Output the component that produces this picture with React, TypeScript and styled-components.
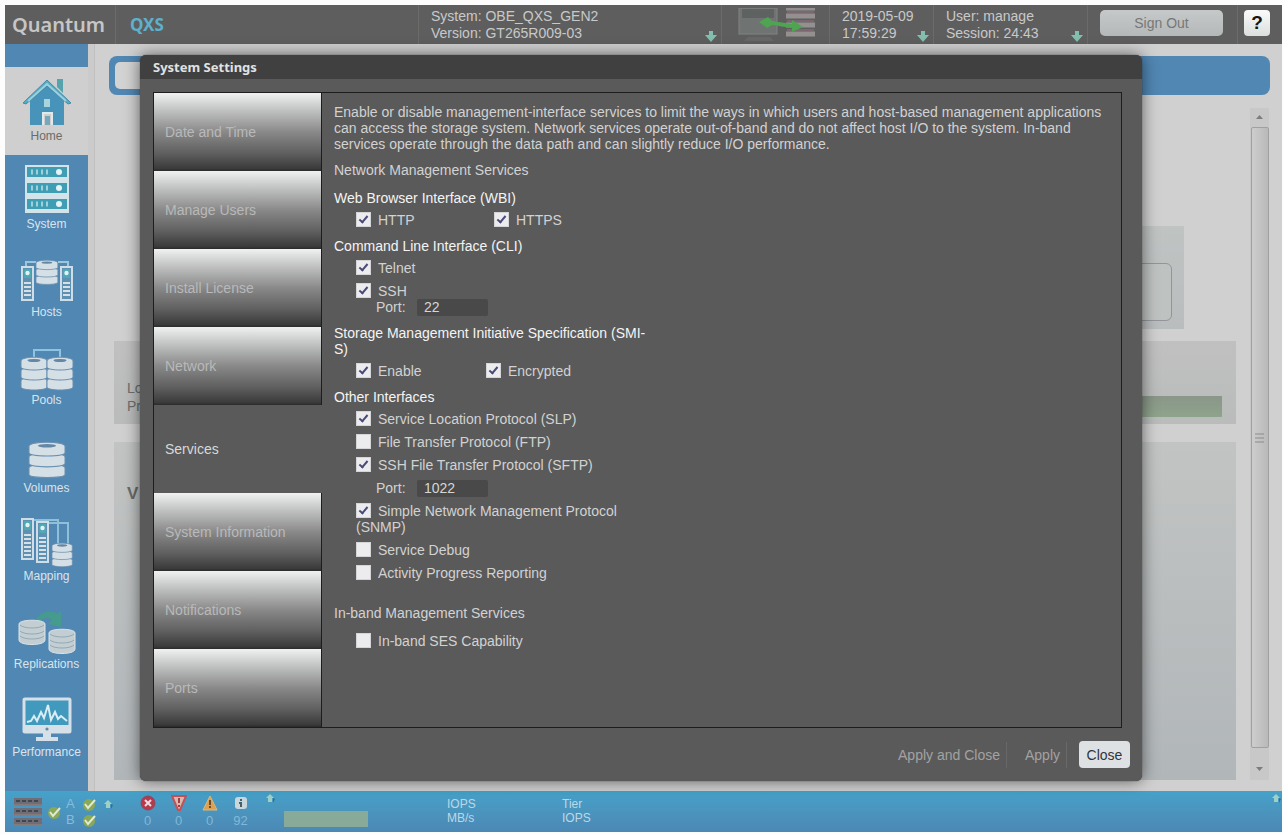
import React from "react";
import styled, { createGlobalStyle } from "styled-components";

const GlobalStyle = createGlobalStyle`
  *, *::before, *::after { box-sizing: border-box; }
  body {
    margin: 0;
    background: #fdfdfd;
    font-family: "Liberation Sans", Arial, sans-serif;
    font-size: 14px;
  }
  button, input { font-family: inherit; }
`;

const Page = styled.div`
  position: relative;
  display: flex;
  flex-direction: column;
  min-height: 100vh;
  padding: 5px 2px 2px 5px;
`;

/* ---------- header ---------- */

const Header = styled.header`
  display: flex;
  height: 39px;
  background: #5e5e5e;
  color: #c9c9c9;
`;

const HeaderCell = styled.div<{ $width?: number }>`
  position: relative;
  flex: ${(p) => (p.$width ? `0 0 ${p.$width}px` : "1 1 0")};
  display: flex;
  flex-direction: column;
  justify-content: center;
  padding-left: 12px;
  font-size: 14px;
  line-height: 17px;
  white-space: nowrap;
  border-left: 1px solid #6b6b6b;
  &:first-child {
    border-left: 0;
    padding-left: 7px;
  }
`;

const Brand = styled.span`
  font: 600 20px/24px "Noto Sans", sans-serif;
  color: #c6c6c6;
`;

const Product = styled.span`
  font: 700 17px/24px "Noto Sans", sans-serif;
  color: #5fb0cc;
  padding-left: 2px;
`;

const HeaderArrow = styled.svg`
  position: absolute;
  right: 3px;
  bottom: 1px;
`;

const ControlCell = styled(HeaderCell)`
  flex-direction: row;
  align-items: center;
  justify-content: flex-start;
  padding-bottom: 4px;
`;

const SignOut = styled.button`
  width: 123px;
  height: 26px;
  border: 0;
  border-radius: 5px;
  background: linear-gradient(#c6c9c9, #b5b8b8);
  color: #777;
  font-size: 14px;
`;

const Help = styled.button`
  width: 26px;
  height: 26px;
  margin-left: -6px;
  padding: 0;
  border: 0;
  border-radius: 4px;
  background: linear-gradient(#fafafa, #dcdfdf);
  color: #151515;
  font: 700 19px/26px "Liberation Sans", sans-serif;
`;

/* ---------- body ---------- */

const Body = styled.div`
  flex: 1;
  display: flex;
`;

const Sidebar = styled.nav`
  flex: 0 0 83px;
  padding-top: 23px;
  background: #5187b3;
`;

const NavItem = styled.a<{ $active?: boolean }>`
  display: flex;
  flex-direction: column;
  align-items: center;
  justify-content: flex-end;
  height: 88px;
  padding-bottom: 11px;
  font-size: 12px;
  line-height: 16px;
  text-decoration: none;
  color: ${(p) => (p.$active ? "#6b6b6b" : "#d9e4ec")};
  background: ${(p) => (p.$active ? "#cfcfcf" : "transparent")};
  svg { display: block; margin-bottom: 1px; }
`;

const Main = styled.main`
  flex: 1;
  display: flex;
  flex-direction: column;
  padding: 12px 12px 11px 21px;
  background: linear-gradient(90deg, #cbcbcb 0 6px, #c0c0c0 6px 7px, #d0d0d0 7px);
`;

const BlueBar = styled.div`
  height: 39px;
  padding: 6px;
  border-radius: 8px;
  background: #5187b3;
`;

const BarField = styled.div`
  width: 120px;
  height: 27px;
  border-radius: 5px;
  background: #d2d3d2;
`;

const Scroller = styled.div`
  flex: 1;
  display: flex;
  gap: 14px;
  padding: 0 1px 0 5px;
`;

const Panels = styled.div`
  flex: 1;
  display: flex;
  flex-direction: column;
`;

const SmallPanel = styled.div`
  height: 103px;
  margin: 131px 52px 0 100px;
  padding: 37px 12px 8px;
  background: linear-gradient(#bfc3c2, #b9bdbe);
`;

const SmallCard = styled.div`
  height: 58px;
  border: 1px solid #92969a;
  border-radius: 6px;
  background: #bec2c1;
`;

const CapacityPanel = styled.div`
  height: 83px;
  margin-top: 12px;
  padding: 38px 14px 0 13px;
  display: flex;
  background: linear-gradient(#c0c0c0, #b9bcbb);
  color: #6e6e6e;
  font-size: 14px;
  line-height: 18px;
`;

const CapacityBar = styled.div`
  flex: 1;
  height: 21px;
  margin-top: 17px;
  background: linear-gradient(#8a9689, #8ea48c);
`;

const VolumePanel = styled.div`
  flex: 1;
  margin-top: 18px;
  padding: 42px 13px 0;
  background: linear-gradient(#c2c4c3, #b1b6b9);
  color: #6a6a6a;
  font-size: 17px;
  font-weight: 700;
  line-height: 20px;
`;

const ScrollTrack = styled.div`
  flex: 0 0 19px;
  display: flex;
  flex-direction: column;
  align-items: center;
  justify-content: space-between;
  margin-top: 13px;
  padding: 6px 0 8px;
  background: #c8c8c8;
`;

const ScrollThumb = styled.div`
  flex: 1;
  width: 18px;
  margin: 8px 0 19px;
  display: flex;
  align-items: center;
  justify-content: center;
  border: 1px solid #a0a0a0;
  border-radius: 2px;
  background: linear-gradient(90deg, #cdcdcd, #b9b9b9);
`;

/* ---------- status bar ---------- */

const StatusBar = styled.footer`
  display: flex;
  align-items: center;
  height: 41px;
  padding-left: 8px;
  background: linear-gradient(#45a2c9, #4b93bd 55%, #4b88b5);
  color: #bcd8e6;
  font-size: 13px;
  line-height: 14px;
`;

const HealthGroup = styled.div`
  display: flex;
  align-items: center;
  width: 119px;
  gap: 4px;
  color: #86bddb;
`;

const Controllers = styled.div`
  display: grid;
  grid-template-columns: 12px 16px;
  gap: 2px 4px;
  align-items: center;
`;

const Corner = styled.svg`
  align-self: flex-start;
  margin-top: 2px;
`;

const Events = styled.div`
  display: flex;
  margin-right: 8px;
`;

const EventCount = styled.div`
  display: flex;
  flex-direction: column;
  align-items: center;
  gap: 3px;
  width: 31px;
  color: #82b8d6;
`;

const StatusMeter = styled.div`
  width: 84px;
  height: 16px;
  margin: 14px 0 0 8px;
  background: #87ab98;
`;

const Rate = styled.div`
  width: 115px;
  padding-bottom: 1px;
  font-size: 12px;
  line-height: 14px;
`;

const Rates = styled.div`
  flex: 1;
  display: flex;
  padding-left: 79px;
`;

/* ---------- dialog ---------- */

const Overlay = styled.div`
  position: absolute;
  inset: 0;
  padding: 55px 142px 0 140px;
`;

const Dialog = styled.section`
  border-radius: 6px;
  background: #5a5a5a;
  box-shadow: 0 0 16px rgba(0, 0, 0, 0.55), 0 0 1px #222;
`;

const DialogTitle = styled.h1`
  margin: 0;
  height: 24px;
  padding-left: 13px;
  border-radius: 6px 6px 0 0;
  background: #404040;
  color: #e2e2e2;
  font: 700 13px/24px "Noto Sans", sans-serif;
`;

const Frame = styled.div`
  display: flex;
  margin: 13px 20px 0 13px;
  border: 1px solid #1d1d1d;
`;

const Tabs = styled.div`
  flex: 0 0 168px;
  display: flex;
  flex-direction: column;
`;

const Tab = styled.button<{ $active?: boolean }>`
  height: ${(p) => (p.$active ? 88 : 78)}px;
  padding: 0 0 0 11px;
  border: 0;
  border-right: 1px solid ${(p) => (p.$active ? "transparent" : "#1d1d1d")};
  text-align: left;
  font-size: 14px;
  color: ${(p) => (p.$active ? "#d8d8d8" : "#b9b9b9")};
  background: ${(p) =>
    p.$active
      ? "transparent"
      : "linear-gradient(#f0f1f1 0, #c5c6c6 20%, #898989 50%, #5e5e5e 78%, #3a3a3a 97%, #2a2a2a)"};
`;

const Content = styled.div`
  flex: 1;
  padding: 11px 6px 9px 12px;
  color: #d2d2d2;
  font-size: 14px;
  line-height: 16px;
`;

const Intro = styled.p`
  margin: 0;
  max-width: 780px;
`;

const Section = styled.h2<{ $gap: number }>`
  margin: ${(p) => p.$gap}px 0 12px;
  font-size: 14px;
  font-weight: 400;
`;

const Group = styled.fieldset`
  width: 318px;
  margin: 0 0 10px;
  padding: 0;
  border: 0;
`;

const Legend = styled.legend`
  padding: 0;
  margin-bottom: 6px;
  color: #f4f4f4;
`;

const Options = styled.div`
  display: flex;
  flex-direction: column;
  gap: 7px;
  padding-left: 22px;
`;

const Pair = styled.div<{ $first: number }>`
  display: grid;
  grid-template-columns: ${(p) => p.$first}px 1fr;
`;

const Tick = styled.input.attrs({ type: "checkbox" })`
  appearance: none;
  display: inline-grid;
  place-content: center;
  width: 15px;
  height: 15px;
  margin: 0 7px 0 0;
  vertical-align: top;
  border: 1px solid #d5d5d8;
  background: #ececee;
  &:checked::after {
    content: "";
    width: 5px;
    height: 9px;
    margin-bottom: 2px;
    border: solid #4a4a78;
    border-width: 0 2px 2px 0;
    transform: rotate(40deg);
  }
`;

const PortRow = styled.label`
  display: flex;
  align-items: center;
  height: 16px;
  padding-left: 20px;
`;

const PortLabel = styled.span`
  width: 41px;
`;

const PortInput = styled.input`
  width: 71px;
  height: 17px;
  padding: 0 7px;
  border: 0;
  border-radius: 2px;
  background: #494949;
  color: #d6d6d6;
  font-size: 14px;
`;

const DialogFooter = styled.div`
  display: flex;
  justify-content: flex-end;
  align-items: center;
  height: 53px;
  padding-right: 12px;
`;

const FlatButton = styled.button`
  height: 26px;
  padding: 0 6px;
  margin-right: 12px;
  border: 0;
  border-right: 1px solid #686868;
  background: transparent;
  color: #a2a2a2;
  font-size: 14px;
`;

const CloseButton = styled.button`
  width: 51px;
  height: 27px;
  padding: 0;
  border: 0;
  border-radius: 4px;
  background: #dde1e3;
  color: #30343c;
  font-size: 14px;
`;

/* ---------- drawings ---------- */

const DownArrow = () => (
  <HeaderArrow width="14" height="13" viewBox="0 0 14 13" aria-hidden="true">
    <path d="M5 1h4v4h4L7 12 1 5h4z" fill="#83bfae" />
  </HeaderArrow>
);

const CornerArrow = () => (
  <Corner width="12" height="12" viewBox="0 0 12 12" aria-hidden="true">
    <path d="M2 5 6 1l4 4H8v4H4V5z" fill="#9fd0c4" />
    <path d="M9 5l2 1-2 4z" fill="#3d6f6a" />
  </Corner>
);

const Disk = ({ x, y, w = 26, rows = 3 }: { x: number; y: number; w?: number; rows?: number }) => {
  const band = 10;
  return (
    <g>
      {Array.from({ length: rows }, (_, i) => rows - 1 - i).map((i) => (
        <path
          key={i}
          transform={`translate(${x} ${y + i * band})`}
          d={`M0 4C0 -1 ${w} -1 ${w} 4V10C${w} 14 0 14 0 10Z`}
          fill="#d5dfe6"
          stroke="#6b8fae"
          strokeWidth="1"
        />
      ))}
      <ellipse cx={x + w / 2} cy={y + 3.5} rx={w / 4} ry="1.6" fill="#6587a6" />
    </g>
  );
};

const HomeIcon = () => (
  <svg width="52" height="50" viewBox="0 0 52 50" aria-hidden="true">
    <path d="M36 2h6v14l-6-6z" fill="#55a3ac" />
    <path d="M9 23 26 7l17 16v25H31V37h-9v11H9z" fill="#4793ba" />
    <path d="M2 26 26 3l24 23-3 1L26 9 5 27z" fill="#54adc6" stroke="#4a89a8" strokeWidth="1" />
    <path d="M7 24 26 7l19 17" fill="none" stroke="#9bd0de" strokeWidth="2" />
    <path d="M22 48V36h9v12" fill="#cfcfcf" stroke="#dfeaed" strokeWidth="2" />
    <path d="M24 39h5v9h-5z" fill="#79a6b8" />
    <path d="M23 22h6v8h-6z" fill="#a9d4de" />
  </svg>
);

const SystemIcon = () => (
  <svg width="46" height="50" viewBox="0 0 46 50" aria-hidden="true">
    {[1, 17, 33].map((y) => (
      <g key={y}>
        <rect x="2" y={y} width="42" height="12" fill="#3f9db4" stroke="#d3e3ea" strokeWidth="2" />
        <path d={`M7 ${y + 6}h17`} stroke="#9bd2dd" strokeWidth="5" strokeDasharray="2 3" />
        <circle cx="35" cy={y + 6} r="3" fill="#e6f4f6" />
        <path d={`M1 ${y + 14}h44`} stroke="#d3e3ea" strokeWidth="2" />
      </g>
    ))}
  </svg>
);

const Tower = ({ x, y, h }: { x: number; y: number; h: number }) => (
  <g>
    <rect x={x} y={y} width="11" height={h} fill="#5e90b1" stroke="#cfdde6" strokeWidth="2" />
    <rect x={x + 2} y={y + 2} width="7" height="9" fill="#4fa9b4" />
    <circle cx={x + 5.5} cy={y + 6} r="2.2" fill="#e2f2f4" />
    <path d={`M${x + 5.5} ${y + 15}V${y + h - 3}`} stroke="#d5e0e7" strokeWidth="7" strokeDasharray="2 2" />
  </g>
);

const HostsIcon = () => (
  <svg width="54" height="44" viewBox="0 0 54 44" aria-hidden="true">
    <path d="M6 8V3h10M48 8V3H38" fill="none" stroke="#9cc6da" strokeWidth="2" />
    <Tower x={2} y={8} h={33} />
    <Tower x={41} y={8} h={33} />
    <g transform="translate(16 1) scale(.84 .74)"><Disk x={0} y={0} /></g>
  </svg>
);

const PoolsIcon = () => (
  <svg width="54" height="43" viewBox="0 0 54 43" aria-hidden="true">
    <path d="M14 10V2h26v8" fill="none" stroke="#8fc4e0" strokeWidth="2" />
    <Disk x={1} y={9} />
    <Disk x={27} y={9} />
  </svg>
);

const VolumesIcon = () => (
  <svg width="38" height="38" viewBox="0 0 38 38" aria-hidden="true">
    <g transform="translate(1 1) scale(1 1.08)"><Disk x={0} y={0} w={36} /></g>
  </svg>
);

const MappingIcon = () => (
  <svg width="54" height="50" viewBox="0 0 54 50" aria-hidden="true">
    <path d="M12 3h26v24M28 6h20v21" fill="none" stroke="#8fc0da" strokeWidth="2" />
    <Tower x={2} y={2} h={40} />
    <Tower x={17} y={5} h={40} />
    <g transform="translate(32 26) scale(.78 .72)"><Disk x={0} y={0} /></g>
  </svg>
);

const ReplicationsIcon = () => (
  <svg width="58" height="46" viewBox="0 0 58 46" aria-hidden="true">
    <path d="M17 13C20 3 33 0 39 5l4-3v16l-13-3 4-4C30 7 24 8 22 15z" fill="#459b8d" />
    {[[1, 11], [31, 20]].map(([x, y]) => (
      <g key={x} transform={`translate(${x} ${y})`}>
        <path d="M0 4C0-1 26-1 26 4v16c0 6-26 6-26 0z" fill="#c3ced3" stroke="#dbe3e7" />
        <path d="M1 5c4 4 20 4 24 0M1 11c4 4 20 4 24 0M1 16c4 4 20 4 24 0" fill="none" stroke="#93a9b4" />
      </g>
    ))}
  </svg>
);

const PerformanceIcon = () => (
  <svg width="50" height="46" viewBox="0 0 50 46" aria-hidden="true">
    <rect x="2" y="2" width="46" height="33" rx="1" fill="#4199bd" stroke="#d5e0e8" strokeWidth="3" />
    <path d="M3 28h44v8H3z" fill="#d5e0e8" />
    <path d="M5 25l4-1 3-5 3 5 4-9 3 6 4-13 3 15 4-8 3 7 3-3 6 5" fill="none" stroke="#d8eef4" strokeWidth="2" />
    <circle cx="25" cy="32" r="1.6" fill="#6d8796" />
    <path d="M21 36h8v4h-8zM14 40h22v4H14z" fill="#d5e0e8" />
  </svg>
);

const LinkIcon = () => (
  <svg width="84" height="34" viewBox="0 0 84 34" aria-hidden="true">
    <rect x="5" y="0" width="38" height="26" fill="#6f7371" stroke="#828282" />
    <path d="M8 1h32v9H8z" fill="#5e6260" />
    <path d="M14 29h22l4 4H10z" fill="#676767" />
    <path d="M52 0h29M52 8h29M52 17h29M52 26h29" stroke="#94908f" strokeWidth="5" />
    <path d="M53 4h27M53 13h27M53 22h27" stroke="#7c6670" strokeWidth="2" />
    <path d="M25 14l9-5 4 4 20 3v-4l11 7-11 5v-4l-20-3-5 3z" fill="#4fa452" />
  </svg>
);

const GreenCheck = () => (
  <svg width="15" height="14" viewBox="0 0 15 14" aria-hidden="true">
    <circle cx="7" cy="8" r="6" fill="#89a957" />
    <path d="M3 7l3 4 7-8" fill="none" stroke="#e3ead4" strokeWidth="2" />
  </svg>
);

const RackIcon = () => (
  <svg width="30" height="30" viewBox="0 0 30 30" aria-hidden="true">
    {[1, 11, 21].map((y) => (
      <g key={y}>
        <rect x="1" y={y} width="28" height="8" fill="#6f6d75" />
        <path d={`M3 ${y + 3}h24`} stroke="#3f4850" strokeWidth="2" strokeDasharray="4 2" />
        <path d={`M1 ${y + 7}h28`} stroke="#a08780" strokeWidth="1" />
      </g>
    ))}
  </svg>
);

const CriticalIcon = () => (
  <svg width="16" height="16" viewBox="0 0 16 16" aria-hidden="true">
    <circle cx="8" cy="8" r="7" fill="#b8394c" stroke="#8d4b62" />
    <path d="M5 5l6 6M11 5l-6 6" stroke="#f0dce0" strokeWidth="2" />
  </svg>
);

const ErrorIcon = () => (
  <svg width="16" height="16" viewBox="0 0 16 16" aria-hidden="true">
    <path d="M1 1h14L9 15H7z" fill="#d9b9ae" stroke="#c2525a" strokeWidth="2" />
    <path d="M8 3v5M8 10v2" stroke="#a33d45" strokeWidth="2" />
  </svg>
);

const WarningIcon = () => (
  <svg width="16" height="16" viewBox="0 0 16 16" aria-hidden="true">
    <path d="M8 1l7 14H1z" fill="#dfa04d" stroke="#d5bb84" />
    <path d="M8 5v5M8 11v2" stroke="#70492a" strokeWidth="2" />
  </svg>
);

const InfoIcon = () => (
  <svg width="16" height="16" viewBox="0 0 16 16" aria-hidden="true">
    <rect x="2" y="2" width="12" height="12" rx="3" fill="#c9d7dd" />
    <path d="M8 4v2M6 8h2v4" fill="none" stroke="#44606e" strokeWidth="2" />
  </svg>
);

const Caret = ({ down }: { down?: boolean }) => (
  <svg width="7" height="5" viewBox="0 0 7 5" aria-hidden="true">
    <path d={down ? "M0 0h7L3.500 4z" : "M0 5h7L3.500 1z"} fill="#7d7d7d" />
  </svg>
);

const Grip = () => (
  <svg width="9" height="10" viewBox="0 0 9 10" aria-hidden="true">
    <path d="M0 1h9M0 5h9M0 9h9" stroke="#8b8b8b" />
  </svg>
);

/* ---------- data ---------- */

const navItems = [
  { label: "Home", Icon: HomeIcon, active: true },
  { label: "System", Icon: SystemIcon },
  { label: "Hosts", Icon: HostsIcon },
  { label: "Pools", Icon: PoolsIcon },
  { label: "Volumes", Icon: VolumesIcon },
  { label: "Mapping", Icon: MappingIcon },
  { label: "Replications", Icon: ReplicationsIcon },
  { label: "Performance", Icon: PerformanceIcon },
];

const tabs = [
  "Date and Time",
  "Manage Users",
  "Install License",
  "Network",
  "Services",
  "System Information",
  "Notifications",
  "Ports",
];

const events = [
  { Icon: CriticalIcon, count: 0 },
  { Icon: ErrorIcon, count: 0 },
  { Icon: WarningIcon, count: 0 },
  { Icon: InfoIcon, count: 92 },
];

const Check = ({ label, on }: { label: string; on?: boolean }) => (
  <label>
    <Tick defaultChecked={on} />
    {label}
  </label>
);

const Port = ({ value }: { value: string }) => (
  <PortRow>
    <PortLabel>Port:</PortLabel>
    <PortInput type="text" defaultValue={value} />
  </PortRow>
);

export default function App() {
  return (
    <>
      <GlobalStyle />
      <Page>
        <Header>
          <HeaderCell $width={110}><Brand>Quantum</Brand></HeaderCell>
          <HeaderCell><Product>QXS</Product></HeaderCell>
          <HeaderCell $width={303}>
            <span>System: OBE_QXS_GEN2</span>
            <span>Version: GT265R009-03</span>
            <DownArrow />
          </HeaderCell>
          <HeaderCell $width={108}><LinkIcon /></HeaderCell>
          <HeaderCell $width={104}>
            <span>2019-05-09</span>
            <span>17:59:29</span>
            <DownArrow />
          </HeaderCell>
          <HeaderCell $width={154}>
            <span>User: manage</span>
            <span>Session: 24:43</span>
            <DownArrow />
          </HeaderCell>
          <ControlCell $width={150}><SignOut>Sign Out</SignOut></ControlCell>
          <ControlCell $width={45}><Help>?</Help></ControlCell>
        </Header>

        <Body>
          <Sidebar>
            {navItems.map(({ label, Icon, active }) => (
              <NavItem key={label} href="#" $active={active}>
                <Icon />
                {label}
              </NavItem>
            ))}
          </Sidebar>
          <Main>
            <BlueBar><BarField /></BlueBar>
            <Scroller>
              <Panels>
                <SmallPanel><SmallCard /></SmallPanel>
                <CapacityPanel>
                  <div>Lo<br />Pr</div>
                  <CapacityBar />
                </CapacityPanel>
                <VolumePanel>V</VolumePanel>
              </Panels>
              <ScrollTrack>
                <Caret />
                <ScrollThumb><Grip /></ScrollThumb>
                <Caret down />
              </ScrollTrack>
            </Scroller>
          </Main>
        </Body>

        <StatusBar>
          <HealthGroup>
            <RackIcon />
            <GreenCheck />
            <Controllers>
              <span>A</span><GreenCheck />
              <span>B</span><GreenCheck />
            </Controllers>
            <CornerArrow />
          </HealthGroup>
          <Events>
            {events.map(({ Icon, count }, i) => (
              <EventCount key={i}>
                <Icon />
                {count}
              </EventCount>
            ))}
          </Events>
          <CornerArrow />
          <StatusMeter />
          <Rates>
            <Rate>IOPS<br />MB/s</Rate>
            <Rate>Tier<br />IOPS</Rate>
          </Rates>
          <CornerArrow />
        </StatusBar>

        <Overlay>
          <Dialog role="dialog" aria-labelledby="dialog-title">
            <DialogTitle id="dialog-title">System Settings</DialogTitle>
            <Frame>
              <Tabs>
                {tabs.map((t) => (
                  <Tab key={t} $active={t === "Services"}>{t}</Tab>
                ))}
              </Tabs>
              <Content>
                <Intro>
                  Enable or disable management-interface services to limit the ways in which users and host-based management applications can access the storage system. Network services operate out-of-band and do not affect host I/O to the system. In-band services operate through the data path and can slightly reduce I/O performance.
                </Intro>
                <Section $gap={10}>Network Management Services</Section>
                <Group>
                  <Legend>Web Browser Interface (WBI)</Legend>
                  <Options>
                    <Pair $first={138}>
                      <Check label="HTTP" on />
                      <Check label="HTTPS" on />
                    </Pair>
                  </Options>
                </Group>
                <Group>
                  <Legend>Command Line Interface (CLI)</Legend>
                  <Options>
                    <Check label="Telnet" on />
                    <div>
                      <Check label="SSH" on />
                      <Port value="22" />
                    </div>
                  </Options>
                </Group>
                <Group>
                  <Legend>Storage Management Initiative Specification (SMI-S)</Legend>
                  <Options>
                    <Pair $first={130}>
                      <Check label="Enable" on />
                      <Check label="Encrypted" on />
                    </Pair>
                  </Options>
                </Group>
                <Group>
                  <Legend>Other Interfaces</Legend>
                  <Options>
                    <Check label="Service Location Protocol (SLP)" on />
                    <Check label="File Transfer Protocol (FTP)" />
                    <Check label="SSH File Transfer Protocol (SFTP)" on />
                    <Port value="1022" />
                    <Check label="Simple Network Management Protocol (SNMP)" on />
                    <Check label="Service Debug" />
                    <Check label="Activity Progress Reporting" />
                  </Options>
                </Group>
                <Section $gap={24}>In-band Management Services</Section>
                <Options>
                  <Check label="In-band SES Capability" />
                </Options>
              </Content>
            </Frame>
            <DialogFooter>
              <FlatButton>Apply and Close</FlatButton>
              <FlatButton>Apply</FlatButton>
              <CloseButton>Close</CloseButton>
            </DialogFooter>
          </Dialog>
        </Overlay>
      </Page>
    </>
  );
}
